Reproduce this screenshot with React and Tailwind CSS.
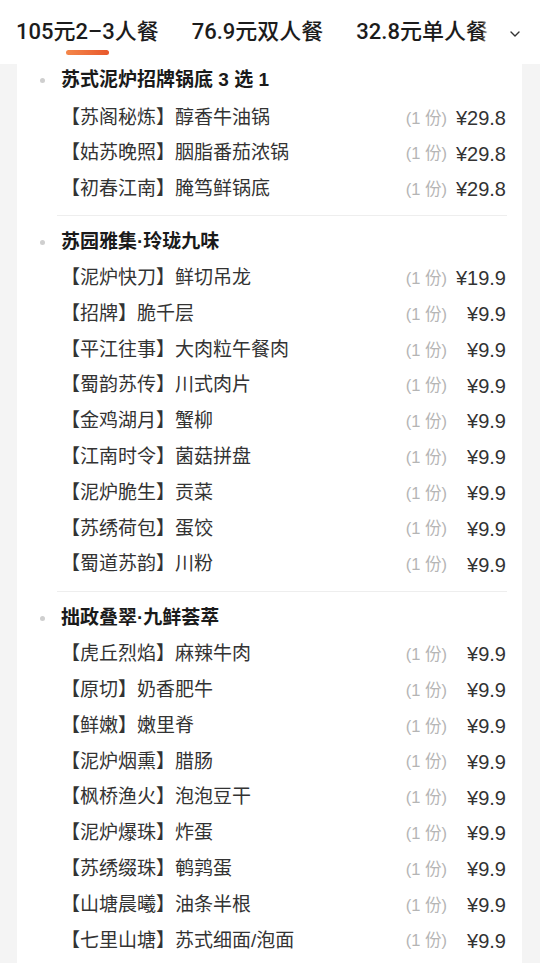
import React from 'react'

const tabs = ['105元2–3人餐', '76.9元双人餐', '32.8元单人餐']

const sections = [
  {
    title: '苏式泥炉招牌锅底 3 选 1',
    items: [
      ['【苏阁秘炼】醇香牛油锅', '¥29.8'],
      ['【姑苏晚照】胭脂番茄浓锅', '¥29.8'],
      ['【初春江南】腌笃鲜锅底', '¥29.8'],
    ],
  },
  {
    title: '苏园雅集·玲珑九味',
    items: [
      ['【泥炉快刀】鲜切吊龙', '¥19.9'],
      ['【招牌】脆千层', '¥9.9'],
      ['【平江往事】大肉粒午餐肉', '¥9.9'],
      ['【蜀韵苏传】川式肉片', '¥9.9'],
      ['【金鸡湖月】蟹柳', '¥9.9'],
      ['【江南时令】菌菇拼盘', '¥9.9'],
      ['【泥炉脆生】贡菜', '¥9.9'],
      ['【苏绣荷包】蛋饺', '¥9.9'],
      ['【蜀道苏韵】川粉', '¥9.9'],
    ],
  },
  {
    title: '拙政叠翠·九鲜荟萃',
    items: [
      ['【虎丘烈焰】麻辣牛肉', '¥9.9'],
      ['【原切】奶香肥牛', '¥9.9'],
      ['【鲜嫩】嫩里脊', '¥9.9'],
      ['【泥炉烟熏】腊肠', '¥9.9'],
      ['【枫桥渔火】泡泡豆干', '¥9.9'],
      ['【泥炉爆珠】炸蛋', '¥9.9'],
      ['【苏绣缀珠】鹌鹑蛋', '¥9.9'],
      ['【山塘晨曦】油条半根', '¥9.9'],
      ['【七里山塘】苏式细面/泡面', '¥9.9'],
    ],
  },
]

function TabBar() {
  return (
    <div className="relative h-[64px] bg-white overflow-hidden">
      <div className="flex pl-4 gap-[33px] whitespace-nowrap">
        {tabs.map((t, i) => (
          <div key={t} className="flex flex-col items-center pt-[18px] shrink-0">
            <span className="font-['Roboto','Noto_Sans_CJK_SC',sans-serif] text-[22px] leading-[28px] font-medium text-[#1c1c1c]">{t}</span>
            {i === 0 && (
              <span className="mt-[4px] h-[5px] w-[43px] rounded-full bg-gradient-to-r from-[#f4874a] to-[#e8572c]" />
            )}
          </div>
        ))}
      </div>
      <div className="absolute right-0 top-0 h-full w-[58px] flex">
        <div className="w-[8px] h-full bg-gradient-to-r from-white/0 to-white" />
        <div className="flex-1 h-full bg-white flex items-center justify-center pt-[4px]">
          <svg width="10" height="6" viewBox="0 0 10 6" fill="none">
            <path d="M1 1l4 4 4-4" stroke="#333" strokeWidth="1.4" strokeLinecap="round" strokeLinejoin="round" />
          </svg>
        </div>
      </div>
    </div>
  )
}

function Section({ section, index, last }) {
  const first = index === 0
  return (
    <div className={first ? '' : index === 1 ? 'pt-[11px]' : 'pt-[12px]'}>
      <div className="flex items-center h-[30px]">
        <span className="ml-[22.5px] w-[5px] h-[5px] rounded-full bg-[#cfcfcf]" />
        <span className="ml-[16.5px] text-[19px] font-bold text-[#1a1a1a]">{section.title}</span>
      </div>
      <div className={first ? 'mt-[5px]' : 'mt-[3px]'}>
        {section.items.map(([name, price]) => (
          <div key={name} className="flex items-center h-[35.8px] pl-[44px] pr-[16px]">
            <span className="flex-1 text-[19px] text-[#333333] whitespace-nowrap">{name}</span>
            <span className="text-[16.5px] text-[#b5b5b5]">(1 份)</span>
            <span className="w-[59px] text-right text-[20px] text-[#333333]">{price}</span>
          </div>
        ))}
      </div>
      {!last && <div className="mt-[8px] ml-[40px] mr-[15px] h-px bg-[#eeeeee]" />}
    </div>
  )
}

export default function App() {
  return (
    <div className="min-h-screen bg-[#f4f4f4] font-['Liberation_Sans','Noto_Sans_CJK_SC',sans-serif]">
      <TabBar />
      <div className="ml-[17px] w-[505px] bg-white pt-[1px] pb-6">
        {sections.map((s, i) => (
          <Section key={s.title} section={s} index={i} last={i === sections.length - 1} />
        ))}
      </div>
    </div>
  )
}
